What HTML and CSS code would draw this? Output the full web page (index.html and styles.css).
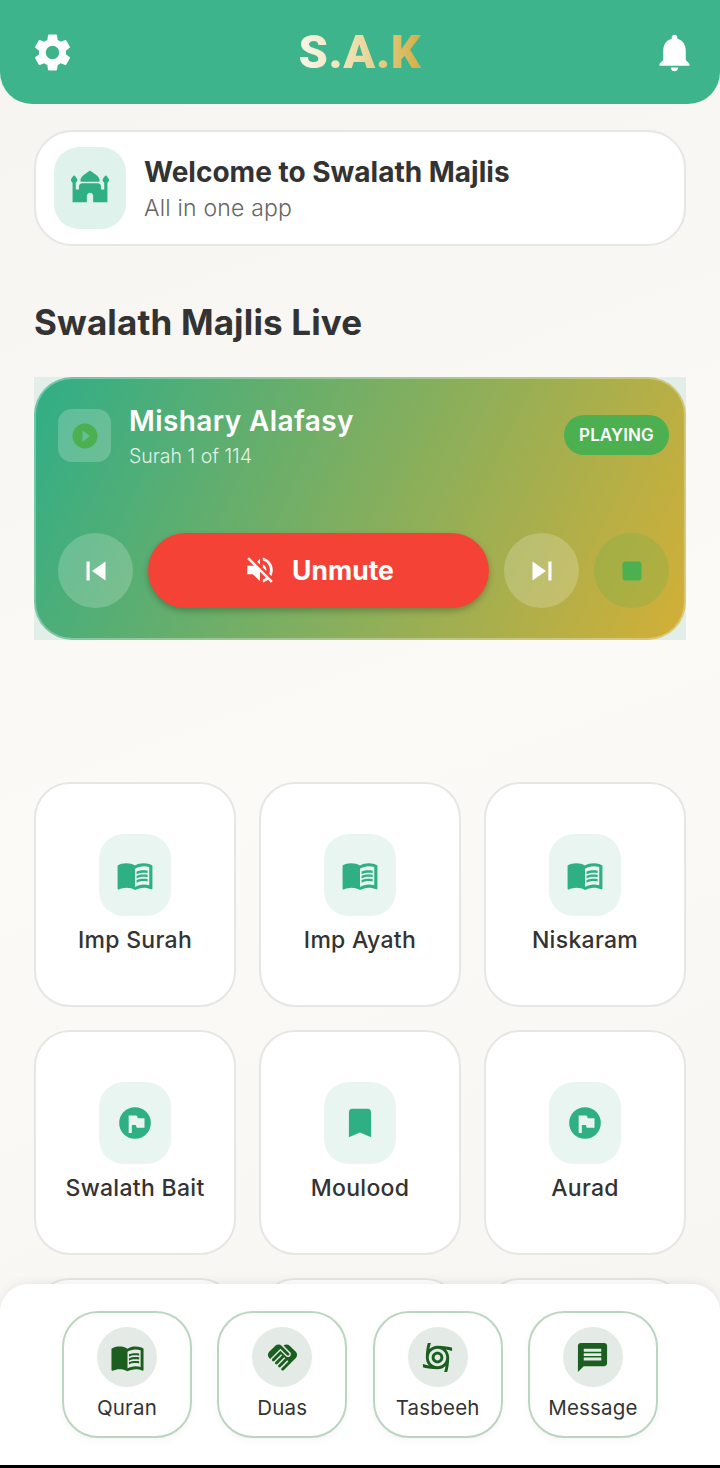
FILE: index.html
```html
<!DOCTYPE html>
<html lang="en">
<head>
    <meta charset="UTF-8">
    <meta name="viewport" content="width=device-width, initial-scale=1.0">
    <title>S.A.K - Swalath Majlis</title>
    <link rel="stylesheet" href="styles.css">
</head>
<body>
    <svg class="sprite" xmlns="http://www.w3.org/2000/svg">
        <symbol id="i-settings" viewBox="0 0 24 24"><path d="M19.14 12.94c.04-.3.06-.61.06-.94 0-.32-.02-.64-.07-.94l2.03-1.58c.18-.14.23-.41.12-.61l-1.92-3.32c-.12-.22-.37-.29-.59-.22l-2.39.96c-.5-.38-1.03-.7-1.62-.94l-.36-2.54c-.04-.24-.24-.41-.48-.41h-3.84c-.24 0-.43.17-.47.41l-.36 2.54c-.59.24-1.13.57-1.62.94l-2.39-.96c-.22-.08-.47 0-.59.22L2.74 8.87c-.12.21-.08.47.12.61l2.03 1.58c-.05.3-.09.63-.09.94s.02.64.07.94l-2.03 1.58c-.18.14-.23.41-.12.61l1.92 3.32c.12.22.37.29.59.22l2.39-.96c.5.38 1.03.7 1.62.94l.36 2.54c.05.24.24.41.48.41h3.84c.24 0 .44-.17.47-.41l.36-2.54c.59-.24 1.13-.56 1.62-.94l2.39.96c.22.08.47 0 .59-.22l1.92-3.32c.12-.22.07-.47-.12-.61l-2.01-1.58zM12 15.6c-1.98 0-3.6-1.62-3.6-3.6s1.62-3.6 3.6-3.6 3.6 1.62 3.6 3.6-1.62 3.6-3.6 3.6z"/></symbol>
        <symbol id="i-bell" viewBox="0 0 24 24"><path d="M12 22c1.1 0 2-.9 2-2h-4c0 1.1.89 2 2 2zm6-6v-5c0-3.07-1.64-5.64-4.5-6.32V4c0-.83-.67-1.5-1.5-1.5s-1.5.67-1.5 1.5v.68C7.63 5.36 6 7.92 6 11v5l-2 2v1h16v-1l-2-2z"/></symbol>
        <symbol id="i-mosque" viewBox="0 0 24 24"><path d="M7 8h10c.29 0 .57.06.84.13.1-.38.16-.77.16-1.13 0-1.1-.9-2.4-2.5-3.5L12 1 8.5 3.5C6.9 4.6 6 5.9 6 7c0 .36.06.75.16 1.13C6.43 8.06 6.71 8 7 8zM24 7c0-1.1-2-3-2-3s-2 1.9-2 3c0 .74.4 1.38 1 1.72V13h-2v-2c0-1.1-.9-2-2-2H7c-1.1 0-2 .9-2 2v2H3V8.72c.6-.34 1-.98 1-1.72 0-1.1-2-3-2-3S0 5.9 0 7c0 .74.4 1.38 1 1.72V21h9v-4c0-1.1.9-2 2-2s2 .9 2 2v4h9V8.72c.6-.34 1-.98 1-1.72z"/></symbol>
        <symbol id="i-book" viewBox="0 0 24 24"><path d="M21 5c-1.11-.35-2.33-.5-3.5-.5-1.95 0-4.05.4-5.5 1.5-1.45-1.1-3.55-1.5-5.5-1.5S2.45 4.9 1 6v14.65c0 .25.25.5.5.5.1 0 .15-.05.25-.05C3.1 20.45 5.05 20 6.5 20c1.95 0 4.05.4 5.5 1.5 1.35-.85 3.8-1.5 5.5-1.5 1.65 0 3.35.3 4.75 1.05.1.05.15.05.25.05.25 0 .5-.25.5-.5V6c-.6-.45-1.25-.75-2-1zm0 13.5c-1.1-.35-2.3-.5-3.5-.5-1.7 0-4.15.65-5.5 1.5V8c1.35-.85 3.8-1.5 5.5-1.5 1.2 0 2.4.15 3.5.5v11.5z"/><path d="M17.5 10.5c.88 0 1.73.09 2.5.26V9.24c-.79-.15-1.64-.24-2.5-.24-1.7 0-3.24.29-4.5.83v1.66c1.13-.64 2.7-.99 4.5-.99zM13 12.49v1.66c1.13-.64 2.7-.99 4.5-.99.88 0 1.73.09 2.5.26V11.9c-.79-.15-1.64-.24-2.5-.24-1.7 0-3.24.3-4.5.83zM17.5 14.33c-1.7 0-3.24.29-4.5.83v1.66c1.13-.64 2.7-.99 4.5-.99.88 0 1.73.09 2.5.26v-1.52c-.79-.16-1.64-.24-2.5-.24z"/></symbol>
        <symbol id="i-flag" viewBox="0 0 24 24"><path fill-rule="evenodd" d="M12 2a10 10 0 1 0 0 20 10 10 0 0 0 0-20zM8 7.2h4.6c.4 0 .7.2.8.6l.3 1.2h4.3v6h-4.9l-.6-1.8H10v5.1H8z"/></symbol>
        <symbol id="i-bookmark" viewBox="0 0 24 24"><path d="M17 3H7c-1.1 0-1.99.9-1.99 2L5 21l7-3 7 3V5c0-1.1-.9-2-2-2z"/></symbol>
        <symbol id="i-play" viewBox="0 0 24 24"><path d="M12 2C6.48 2 2 6.48 2 12s4.48 10 10 10 10-4.48 10-10S17.52 2 12 2zm-2 14.5v-9l6 4.5-6 4.5z"/></symbol>
        <symbol id="i-prev" viewBox="0 0 24 24"><path d="M6 6h2v12H6zm3.5 6l8.5 6V6z"/></symbol>
        <symbol id="i-next" viewBox="0 0 24 24"><path d="M6 18l8.5-6L6 6v12zM16 6v12h2V6h-2z"/></symbol>
        <symbol id="i-stop" viewBox="0 0 24 24"><rect x="6" y="6" width="12" height="12" rx="2"/></symbol>
        <symbol id="i-mute" viewBox="0 0 24 24"><path d="M16.5 12c0-1.77-1.02-3.29-2.5-4.03v2.21l2.45 2.45c.03-.2.05-.41.05-.63zm2.5 0c0 .94-.2 1.82-.54 2.64l1.51 1.51C20.63 14.91 21 13.5 21 12c0-4.28-2.99-7.86-7-8.77v2.06c2.89.86 5 3.54 5 6.71zM4.27 3L3 4.27 7.73 9H3v6h4l5 5v-6.73l4.25 4.25c-.67.52-1.42.93-2.25 1.18v2.06c1.38-.31 2.63-.95 3.69-1.81L19.73 21 21 19.73l-9-9L4.27 3zM12 4L9.91 6.09 12 8.18V4z"/></symbol>
        <symbol id="i-hands" viewBox="0 0 24 24"><path d="M16.48 10.41c-.39.39-1.04.39-1.43 0l-4.47-4.46-7.05 7.04-.66-.63c-1.17-1.17-1.17-3.07 0-4.24l4.24-4.24c1.17-1.17 3.07-1.17 4.24 0L16.48 9c.39.39.39 1.02 0 1.41zm.7-2.12c.78.78.78 2.05 0 2.83-1.27 1.27-2.61.22-2.83 0l-3.76-3.76-5.57 5.57c-.39.39-.39 1.02 0 1.41.39.39 1.02.39 1.42 0l4.62-4.62.71.71-4.62 4.62c-.39.39-.39 1.02 0 1.41.39.39 1.02.39 1.42 0l4.62-4.62.71.71-4.62 4.62c-.39.39-.39 1.02 0 1.41.39.39 1.02.39 1.41 0l4.62-4.62.71.71-4.62 4.62c-.39.39-.39 1.02 0 1.41.39.39 1.02.39 1.41 0l8.32-8.34c1.17-1.17 1.17-3.07 0-4.24l-4.24-4.24c-1.15-1.15-3.01-1.17-4.18-.06l4.67 4.67z"/></symbol>
        <symbol id="i-cyclone" viewBox="0 0 24 24"><path d="M12 8c-2.21 0-4 1.79-4 4s1.79 4 4 4 4-1.79 4-4-1.79-4-4-4zm0 6c-1.1 0-2-.9-2-2s.9-2 2-2 2 .9 2 2-.9 2-2 2zm10-6.53V5.35C20.05 4.77 16.56 4 12 4 9.85 4 7.89 4.86 6.46 6.24 6.59 5.39 6.86 3.84 7.47 2H5.35C4.77 3.95 4 7.44 4 12c0 2.15.86 4.11 2.24 5.54-.85-.14-2.4-.4-4.24-1.01v2.12C3.95 19.23 7.44 20 12 20c2.15 0 4.11-.86 5.54-2.24-.14.85-.4 2.4-1.01 4.24h2.12C19.23 20.05 20 16.56 20 12c0-2.15-.86-4.11-2.24-5.54.85.13 2.4.4 4.24 1.01zM12 18c-3.31 0-6-2.69-6-6s2.69-6 6-6 6 2.69 6 6-2.69 6-6 6z"/></symbol>
        <symbol id="i-message" viewBox="0 0 24 24"><path d="M20 2H4c-1.1 0-1.99.9-1.99 2L2 22l4-4h14c1.1 0 2-.9 2-2V4c0-1.1-.9-2-2-2zm-2 12H6v-2h12v2zm0-3H6V9h12v2zm0-3H6V6h12v2z"/></symbol>
    </svg>

    <div class="app">
        <header class="top-bar">
            <svg class="top-icon top-settings"><use href="#i-settings"/></svg>
            <h1 class="brand">S.A.K</h1>
            <svg class="top-icon top-bell"><use href="#i-bell"/></svg>
        </header>

        <main class="content">
            <section class="welcome">
                <div class="welcome-icon"><svg class="icon-38"><use href="#i-mosque"/></svg></div>
                <div class="welcome-text">
                    <h2 class="welcome-title">Welcome to Swalath Majlis</h2>
                    <p class="welcome-sub">All in one app</p>
                </div>
            </section>

            <h2 class="section-title">Swalath Majlis Live</h2>

            <section class="player-wrap">
                <div class="player">
                    <div class="player-head">
                        <div class="player-thumb"><svg class="thumb-icon"><use href="#i-play"/></svg></div>
                        <div class="player-info">
                            <div class="player-name">Mishary Alafasy</div>
                            <div class="player-sub">Surah 1 of 114</div>
                        </div>
                        <span class="badge">PLAYING</span>
                    </div>
                    <div class="controls">
                        <button class="round-btn"><svg class="icon-38"><use href="#i-prev"/></svg></button>
                        <button class="unmute-btn"><svg class="mute-icon"><use href="#i-mute"/></svg>Unmute</button>
                        <button class="round-btn"><svg class="icon-38"><use href="#i-next"/></svg></button>
                        <button class="round-btn stop-btn"><svg class="icon-38"><use href="#i-stop"/></svg></button>
                    </div>
                </div>
            </section>

            <section class="grid">
                <a class="tile"><span class="tile-icon"><svg class="icon-38"><use href="#i-book"/></svg></span><span class="tile-label">Imp Surah</span></a>
                <a class="tile"><span class="tile-icon"><svg class="icon-38"><use href="#i-book"/></svg></span><span class="tile-label">Imp Ayath</span></a>
                <a class="tile"><span class="tile-icon"><svg class="icon-38"><use href="#i-book"/></svg></span><span class="tile-label">Niskaram</span></a>
                <a class="tile"><span class="tile-icon"><svg class="icon-38"><use href="#i-flag"/></svg></span><span class="tile-label">Swalath Bait</span></a>
                <a class="tile"><span class="tile-icon"><svg class="icon-38"><use href="#i-bookmark"/></svg></span><span class="tile-label">Moulood</span></a>
                <a class="tile"><span class="tile-icon"><svg class="icon-38"><use href="#i-flag"/></svg></span><span class="tile-label">Aurad</span></a>
                <a class="tile"></a>
                <a class="tile"></a>
                <a class="tile"></a>
            </section>
        </main>

        <nav class="bottom-nav">
            <a class="nav-item"><span class="nav-circle"><svg class="nav-icon"><use href="#i-book"/></svg></span>Quran</a>
            <a class="nav-item"><span class="nav-circle"><svg class="nav-icon"><use href="#i-hands"/></svg></span>Duas</a>
            <a class="nav-item"><span class="nav-circle"><svg class="nav-icon"><use href="#i-cyclone"/></svg></span>Tasbeeh</a>
            <a class="nav-item"><span class="nav-circle"><svg class="nav-icon"><use href="#i-message"/></svg></span>Message</a>
        </nav>
    </div>
</body>
</html>
```

FILE: styles.css
```css
* {
    box-sizing: border-box;
}
html, body {
    margin: 0;
    padding: 0;
}
body {
    font-family: Inter, "Open Sans", sans-serif;
    color: #333;
    background-color: #000;
}
h1, h2, p {
    margin: 0;
}
svg {
    fill: currentColor;
    display: block;
}
.sprite {
    display: none;
}
.app {
    width: 720px;
    height: 1465px;
    display: flex;
    flex-direction: column;
    overflow: hidden;
    background: linear-gradient(160deg, #f5f4f0, #fbfaf6 50%, #f6f5f1);
}

/* top bar */
.top-bar {
    flex: none;
    height: 104px;
    padding: 0 23px 0 30px;
    display: grid;
    grid-template-columns: 1fr auto 1fr;
    align-items: center;
    background-color: #3eb48d;
    border-radius: 0 0 32px 32px;
    color: #fff;
}
.top-icon {
    width: 45px;
    height: 45px;
}
.top-bell {
    justify-self: end;
}
.brand {
    margin-left: -7px;
    font-family: Roboto, sans-serif;
    font-size: 47px;
    font-weight: 900;
    letter-spacing: 0.6px;
    line-height: 52px;
    background: linear-gradient(90deg, #f8f6ea, #ecdba6 50%, #d2ae45);
    -webkit-background-clip: text;
    background-clip: text;
    color: transparent;
}

/* page content */
.content {
    flex: 1;
    min-height: 0;
    overflow: hidden;
    padding: 26px 34px 0;
}
.welcome {
    height: 116px;
    display: flex;
    align-items: center;
    gap: 18px;
    padding: 0 18px;
    background-color: #fff;
    border: 2px solid #e6e6e4;
    border-radius: 38px;
}
.welcome-icon {
    width: 72px;
    height: 82px;
    flex: none;
    display: flex;
    align-items: center;
    justify-content: center;
    border-radius: 25px;
    background-color: #dff2eb;
    color: #2eaf84;
}
.welcome-text {
    padding-top: 3px;
}
.icon-38 {
    width: 38px;
    height: 38px;
}
.welcome-title {
    font-size: 28px;
    font-weight: 700;
    line-height: 36px;
    color: #333;
}
.welcome-sub {
    font-size: 23px;
    font-weight: 300;
    letter-spacing: 0.2px;
    line-height: 36px;
    color: #666;
}
.section-title {
    margin-top: 56px;
    font-size: 35px;
    font-weight: 700;
    letter-spacing: 0.15px;
    line-height: 40px;
    color: #333;
}

/* player */
.player-wrap {
    margin-top: 35px;
    height: 263px;
    background-color: #e2efe9;
}
.player {
    height: 100%;
    padding: 30px 15px 30px 22px;
    display: flex;
    flex-direction: column;
    justify-content: space-between;
    border: 2px solid rgba(255, 255, 255, 0.3);
    border-radius: 38px;
    background-image: linear-gradient(115deg, #2fae87, #d4af37);
    background-origin: border-box;
    color: #fff;
}
.player-head {
    display: flex;
    align-items: flex-start;
    gap: 18px;
}
.player-thumb {
    width: 53px;
    height: 53px;
    flex: none;
    display: flex;
    align-items: center;
    justify-content: center;
    border-radius: 14px;
    background-color: rgba(255, 255, 255, 0.2);
    color: #4caf50;
}
.thumb-icon {
    width: 30px;
    height: 30px;
}
.player-info {
    flex: 1;
    margin-top: -5px;
}
.player-name {
    font-size: 28px;
    font-weight: 600;
    letter-spacing: 0.4px;
    line-height: 34px;
}
.player-sub {
    margin-top: 5px;
    font-size: 19.5px;
    font-weight: 300;
    line-height: 26px;
    color: rgba(255, 255, 255, 0.85);
}
.badge {
    margin-top: 6px;
    width: 105px;
    height: 40px;
    display: flex;
    align-items: center;
    justify-content: center;
    border-radius: 20px;
    background-color: #4caf50;
    font-size: 17px;
    font-weight: 600;
    letter-spacing: 0.1px;
}
.controls {
    display: flex;
    gap: 15px;
}
.round-btn {
    width: 75px;
    height: 75px;
    flex: none;
    padding: 0;
    border: 0;
    border-radius: 50%;
    display: flex;
    align-items: center;
    justify-content: center;
    background-color: rgba(255, 255, 255, 0.2);
    color: #fff;
}
.stop-btn {
    background-color: rgba(76, 175, 80, 0.2);
    color: #4caf50;
}
.unmute-btn {
    flex: 1;
    height: 75px;
    padding: 0 0 1px;
    border: 0;
    border-radius: 38px;
    display: flex;
    align-items: center;
    justify-content: center;
    gap: 15px;
    background-color: #f44336;
    box-shadow: 0 3px 6px rgba(0, 0, 0, 0.25);
    color: #fff;
    font-family: inherit;
    font-size: 26.5px;
    font-weight: 700;
}
.mute-icon {
    width: 34px;
    height: 34px;
}

/* tiles */
.grid {
    margin-top: 142px;
    display: grid;
    grid-template-columns: repeat(3, 202px);
    grid-auto-rows: 225px;
    gap: 23px;
}
.tile {
    padding-top: 1px;
    display: flex;
    flex-direction: column;
    align-items: center;
    justify-content: center;
    gap: 8px;
    background-color: #fff;
    border: 2px solid #e6e6e4;
    border-radius: 36px;
}
.tile-icon {
    width: 72px;
    height: 82px;
    display: flex;
    align-items: center;
    justify-content: center;
    border-radius: 25px;
    background-color: #e8f5f0;
    color: #2eaf84;
}
.tile-label {
    font-size: 23px;
    font-weight: 500;
    letter-spacing: 0.3px;
    line-height: 32px;
    color: #333;
}

/* bottom nav */
.bottom-nav {
    flex: none;
    height: 181px;
    padding: 27px 62px 0;
    display: flex;
    justify-content: space-between;
    align-items: flex-start;
    background-color: #fff;
    border-radius: 28px 28px 0 0;
    box-shadow: 0 -3px 10px rgba(0, 0, 0, 0.06);
}
.nav-item {
    width: 130px;
    height: 127px;
    padding-top: 14px;
    display: flex;
    flex-direction: column;
    align-items: center;
    gap: 5px;
    border: 2px solid #bcd5c1;
    border-radius: 36px;
    background-color: #fff;
    box-shadow: 0 3px 8px rgba(0, 0, 0, 0.04);
    font-size: 20.5px;
    letter-spacing: 0.2px;
    line-height: 32px;
    color: #333;
}
.nav-circle {
    width: 60px;
    height: 60px;
    flex: none;
    display: flex;
    align-items: center;
    justify-content: center;
    border-radius: 50%;
    background-color: #e4ebe6;
    color: #1b5e20;
}
.nav-icon {
    width: 35px;
    height: 35px;
}
```
